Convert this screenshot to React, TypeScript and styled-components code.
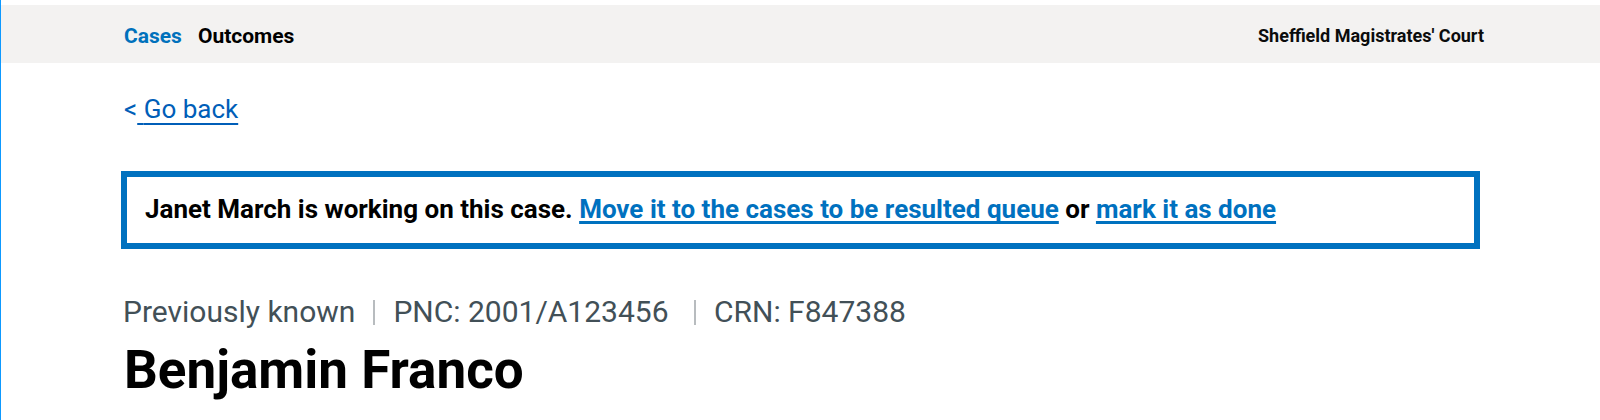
import React from "react";
import styled, { createGlobalStyle } from "styled-components";

const GlobalStyle = createGlobalStyle`
  *, *::before, *::after { box-sizing: border-box; }
  body { margin: 0; background: #fff; color: #000; font-family: Roboto, "Liberation Sans", sans-serif; }
`;
const Page = styled.div`
  border-left: 1px solid #0d99ff;
  padding-top: 5px;
`;
const TopBar = styled.header`
  background: #f3f2f1;
  padding: 19px 116px 15px 123px;
  display: flex;
  align-items: center;
  justify-content: space-between;
  font-weight: 700;
`;
const Nav = styled.nav`
  display: flex;
  gap: 16px;
`;
const NavLink = styled.a<{ $current?: boolean }>`
  font-size: 21px;
  line-height: 24px;
  text-decoration: none;
  color: ${(p) => (p.$current ? "#0071bc" : "#000")};
`;
const Court = styled.span`
  font-size: 18px;
  line-height: 24px;
  color: #0b0c0c;
`;
const Main = styled.main`
  padding: 30px 120px 20px;
`;
const Back = styled.p`
  margin: 0;
  padding-left: 3px;
  font-size: 26px;
  line-height: 32px;
  color: #005eb8;
`;
const BackLink = styled.a`
  color: inherit;
  text-decoration-thickness: 2px;
  text-underline-offset: 5px;
`;
const Notice = styled.section`
  margin-top: 46px;
  border: 6px solid #0071bf;
  padding: 15px 18px 17px;
  font-size: 26px;
  line-height: 34px;
  font-weight: 700;
`;
const NoticeLink = styled.a`
  color: #0071bf;
  text-decoration-thickness: 3px;
  text-underline-offset: 3px;
  text-decoration-skip-ink: none;
`;
const Facts = styled.ul`
  list-style: none;
  margin: 43px 0 0;
  padding: 0 0 0 2px;
  display: flex;
  font-size: 30px;
  line-height: 40px;
  color: #425057;
`;
const Fact = styled.li`
  display: flex;
  align-items: center;
  white-space: pre;

  & + &::before {
    content: "";
    width: 2px;
    height: 25px;
    margin: 0 18px;
    background: #b8bcbf;
  }
`;
const Name = styled.h1`
  margin: 6px 0 0 3px;
  font-size: 53px;
  line-height: 64px;
  font-weight: 700;
`;

export default function App() {
  return (
    <Page>
      <GlobalStyle />
      <TopBar>
        <Nav>
          <NavLink href="#cases" aria-current="page" $current>Cases</NavLink>
          <NavLink href="#outcomes">Outcomes</NavLink>
        </Nav>
        <Court>Sheffield Magistrates' Court</Court>
      </TopBar>
      <Main>
        <Back>&lt;<BackLink href="#back">{"\u00a0"}Go back</BackLink></Back>
        <Notice>
          Janet March is working on this case. <NoticeLink href="#move">Move it to the cases to be resulted queue</NoticeLink> or <NoticeLink href="#done">mark it as done</NoticeLink>
        </Notice>
        <Facts>
          <Fact>Previously known</Fact>
          <Fact>{"PNC: 2001/A123456 "}</Fact>
          <Fact>CRN: F847388</Fact>
        </Facts>
        <Name>Benjamin Franco</Name>
      </Main>
    </Page>
  );
}
